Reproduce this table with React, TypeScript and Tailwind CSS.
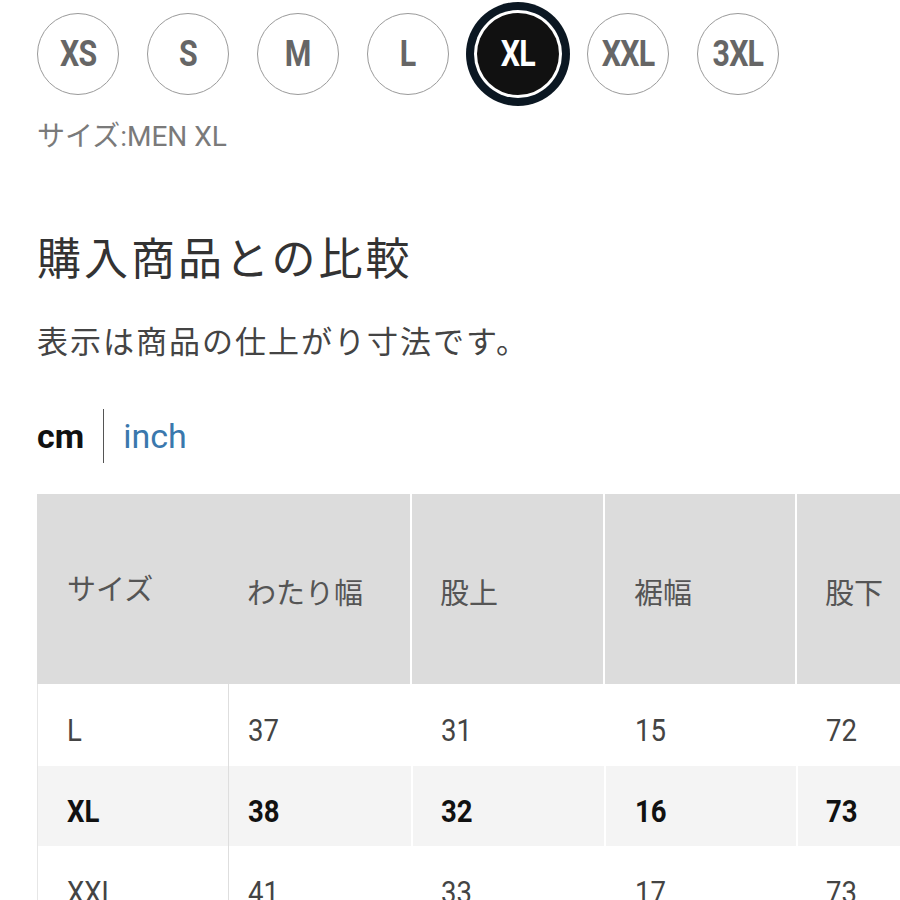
import React from 'react';

const sizes = ['XS', 'S', 'M', 'L', 'XL', 'XXL', '3XL'];

const rows = [
  { size: 'L', vals: ['37', '31', '15', '72'], bold: false },
  { size: 'XL', vals: ['38', '32', '16', '73'], bold: true },
  { size: 'XXL', vals: ['41', '33', '17', '73'], bold: false },
];

const font = { fontFamily: 'Roboto, "Noto Sans CJK JP", sans-serif' };

// latin text in the reference is a narrow face, so squeeze it a bit
const Narrow = ({ children }: { children: React.ReactNode }) => (
  <span className="inline-block origin-left scale-x-[0.86]">{children}</span>
);

export default function App() {
  return (
    <div className="w-[900px] h-[900px] overflow-hidden bg-white text-[#333]" style={font}>
      {/* size picker */}
      <div className="flex gap-[28px] pl-[37px] pt-[13px]">
        {sizes.map((s) => (
          <div
            key={s}
            className={
              s === 'XL'
                ? 'w-[82px] h-[82px] rounded-full bg-[#111] flex items-center justify-center text-white font-bold text-[37px] shadow-[0_0_0_3px_#fff,0_0_0_11px_#0b1722]'
                : 'w-[82px] h-[82px] rounded-full border-[1.5px] border-[#9a9a9a] flex items-center justify-center text-[#666] font-bold text-[37px]'
            }
          >
            <span className="inline-block scale-x-[0.82] tracking-[-1px]">{s}</span>
          </div>
        ))}
      </div>
      <div className="pl-[37px] mt-[26px] text-[28px] leading-[32px] text-[#7a7a7a]">サイズ:MEN XL</div>

      {/* heading */}
      <h2 className="pl-[37px] mt-[82px] text-[44px] leading-[50px] text-[#333] tracking-[3px]">購入商品との比較</h2>
      <p className="pl-[37px] mt-[40px] text-[31px] leading-[36px] text-[#444] tracking-[2px]">表示は商品の仕上がり寸法です。</p>

      {/* unit toggle */}
      <div className="pl-[37px] mt-[48px] flex items-center h-[54px]">
        <span className="text-[34px] font-bold text-[#111]">cm</span>
        <span className="mx-[19px] w-px h-[54px] bg-[#555]" />
        <span className="text-[34px] text-[#3a78ad]">inch</span>
      </div>

      {/* table */}
      <div className="ml-[37px] mt-[31px] text-[29px]">
        <div className="flex h-[190px] bg-[#dcdcdc] text-[#555]">
          <div className="w-[191px] pl-[30px] pt-[4px] h-full flex items-center">サイズ</div>
          <div className="w-[182px] pl-[19px] h-full flex items-center pt-[12px]">わたり幅</div>
          <div className="w-[193px] pl-[28px] h-full flex items-center pt-[12px] border-l-2 border-white">股上</div>
          <div className="w-[192px] pl-[29px] h-full flex items-center pt-[12px] border-l-2 border-white">裾幅</div>
          <div className="flex-1 pl-[28px] h-full flex items-center pt-[12px] border-l-2 border-white">股下</div>
        </div>
        {rows.map((r) => (
          <div
            key={r.size}
            className={`flex text-[32px] border-l border-[#e6e6e6] ${r.bold ? 'h-[80px] bg-[#f4f4f4] font-bold text-[#111]' : 'h-[82px] bg-white text-[#444]'}`}
          >
            <div className="w-[191px] pl-[29px] pt-[10px] h-full flex items-center border-r border-[#dedede]">
              <Narrow>{r.size}</Narrow>
            </div>
            <div className="w-[182px] pl-[19px] pt-[10px] h-full flex items-center">
              <Narrow>{r.vals[0]}</Narrow>
            </div>
            <div className="w-[193px] pl-[28px] pt-[10px] h-full flex items-center border-l-2 border-white">
              <Narrow>{r.vals[1]}</Narrow>
            </div>
            <div className="w-[192px] pl-[29px] pt-[10px] h-full flex items-center border-l-2 border-white">
              <Narrow>{r.vals[2]}</Narrow>
            </div>
            <div className="flex-1 pl-[28px] pt-[10px] h-full flex items-center border-l-2 border-white">
              <Narrow>{r.vals[3]}</Narrow>
            </div>
          </div>
        ))}
      </div>
    </div>
  );
}
